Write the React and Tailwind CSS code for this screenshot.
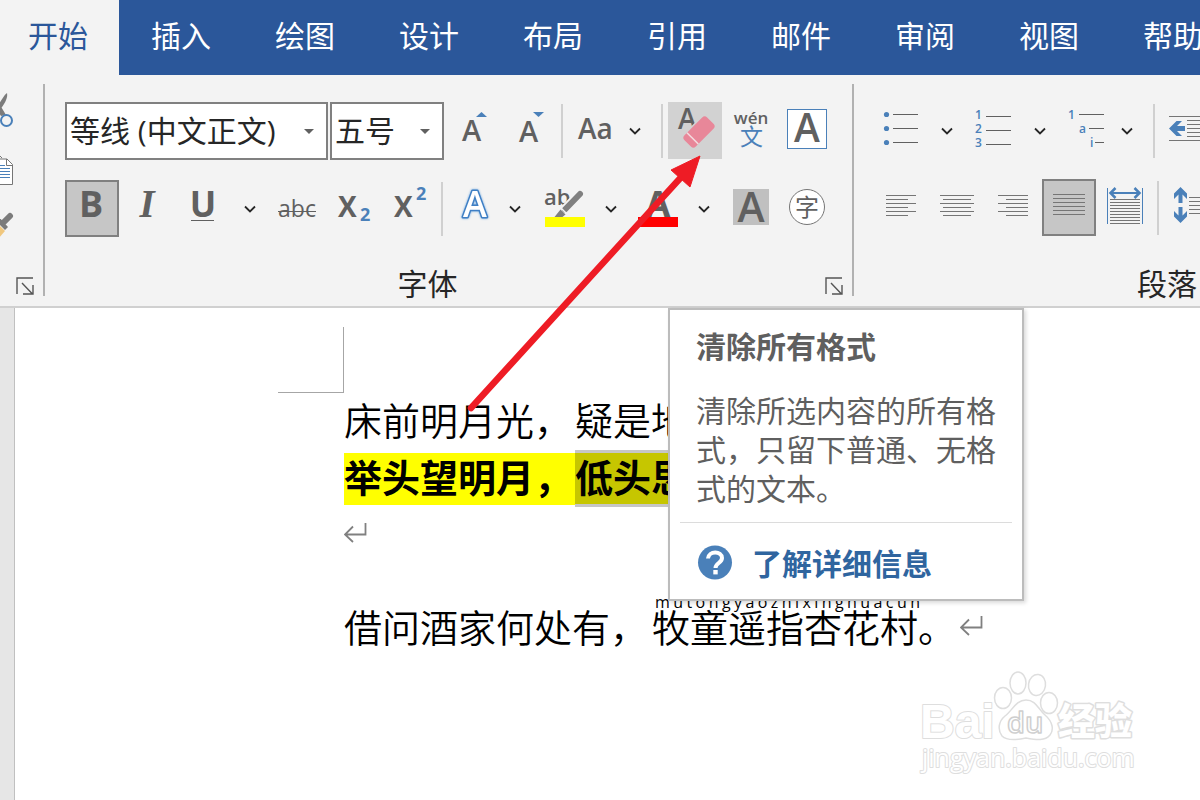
import React from 'react';

const TABS = ['插入', '绘图', '设计', '布局', '引用', '邮件', '审阅', '视图', '帮助'];
const INK = '#606060';
const BLUE = '#4a80b9';
const SANS = '"Open Sans", "Noto Sans CJK SC", sans-serif';

function Tool({ label, children, className = '' }) {
  return (
    <button type="button" aria-label={label} className={`block h-[57px] w-[54px] shrink-0 ${className}`}>
      <svg viewBox="0 0 54 57" width="54" height="57" fontFamily={SANS} fill={INK} className="block">
        {children}
      </svg>
    </button>
  );
}

function More({ label, className = 'w-[38px]' }) {
  return (
    <button type="button" aria-label={label} className={`flex h-[57px] shrink-0 items-center justify-center ${className}`}>
      <svg viewBox="0 0 12 8" width="12" height="8" fill="none" stroke="#262626" strokeWidth="1.8" className="block">
        <path d="M1 1.5 6 6.5 11 1.5" />
      </svg>
    </button>
  );
}

function Divider({ className = '' }) {
  return <div className={`mt-[2px] h-[54px] w-[2px] shrink-0 bg-[#d0d0d0] ${className}`} />;
}

function GroupDivider() {
  return <div className="mt-[9px] mb-[10px] w-[2px] shrink-0 bg-[#b1b1b1]" />;
}

function Launcher({ label, className }) {
  return (
    <button type="button" aria-label={label} className={`flex h-10 items-center justify-end ${className}`}>
      <svg viewBox="0 0 18 18" width="18" height="18" fill="none" stroke="#555" strokeWidth="1.4" className="block">
        <path d="M1 17V1H17M6 6 16 16.5M17 8V17H7" />
      </svg>
    </button>
  );
}

function Combo({ id, label, value, className }) {
  return (
    <div className={`relative h-[58px] shrink-0 ${className}`}>
      <select
        id={id}
        aria-label={label}
        className="h-full w-full appearance-none border-2 border-[#808080] bg-white pb-[2px] pl-[3px] text-[30px] text-[#262626] outline-none"
      >
        <option>{value}</option>
      </select>
      <svg viewBox="0 0 10 5" width="10" height="5" className="pointer-events-none absolute top-[27px] right-[14px]">
        <path d="M0 0H10L5 5Z" fill={INK} />
      </svg>
    </div>
  );
}

function Lines({ rows, step = 4, y, long, short }) {
  return Array.from({ length: rows }, (_, i) => {
    const [a, b] = short && i % 2 ? short : long;
    return <path key={i} d={`M${a} ${y + i * step}H${b}`} stroke="#757575" strokeWidth="1" />;
  });
}

function Clipboard() {
  return (
    <div className="flex w-[43px] shrink-0 flex-col overflow-hidden pt-[15px]">
      <button type="button" aria-label="剪切" className="h-[42px]">
        <svg viewBox="0 0 43 42" width="43" height="42" className="block">
          <path d="M7 3C8 8 5 13 0 20L-3 16C1 12 3 6 7 3ZM0 15 6 25 1 26-4 18Z" fill="#7b7b7b" />
          <circle cx="6.500" cy="30.500" r="5.500" fill="#f3f3f3" stroke={BLUE} strokeWidth="2" />
        </svg>
      </button>
      <button type="button" aria-label="复制" className="mt-5 h-[34px]">
        <svg viewBox="0 0 43 34" width="43" height="34" className="block" fill="none">
          <path d="M-2 7H7L12.500 12.500V32.500H-2Z" fill="#fff" stroke="#757575" />
          <path d="M6.500 7V13.500H12.500M-1 3 2 6" stroke="#757575" />
          <path d="M-2 13.500H5M-2 16.500H10M-2 19.500H10M-2 22.500H10M-2 25.500H10" stroke={BLUE} />
        </svg>
      </button>
      <button type="button" aria-label="格式刷" className="mt-[26px] h-[32px]">
        <svg viewBox="0 0 43 32" width="43" height="32" className="block">
          <path d="M-2 12 5 19-2 27Z" fill="#f0c77e" />
          <path d="M-2 4 8 15 5 18-2 11Z" fill="#7b7b7b" />
          <path d="M4 10 10 4" stroke="#7b7b7b" strokeWidth="6" strokeLinecap="round" />
        </svg>
      </button>
      <Launcher label="剪贴板设置" className="mt-[22px] w-[43px] pr-[9px]" />
    </div>
  );
}

function FontGroup() {
  return (
    <div className="w-[807px] shrink-0 pt-[27px]">
      <div className="flex h-[58px] pl-5">
        <Combo id="font-name" label="字体" value="等线 (中文正文)" className="w-[263px]" />
        <Combo id="font-size" label="字号" value="五号" className="ml-[2px] w-[114px]" />
        <Tool label="增大字号" className="ml-1">
          <text x="14" y="39" fontSize="29" fontWeight="600">A</text>
          <path d="M28 15H39L33.500 10Z" fill={BLUE} />
        </Tool>
        <Tool label="减小字号" className="ml-[2px]">
          <text x="15" y="40" fontSize="29" fontWeight="600">A</text>
          <path d="M29 10H40L34.500 15Z" fill={BLUE} />
        </Tool>
        <Divider className="ml-[3px]" />
        <Tool label="更改大小写" className="ml-[5px]">
          <text x="10" y="37" fontSize="28" fontWeight="600">Aa</text>
        </Tool>
        <More label="更改大小写选项" className="w-[26px]" />
        <Divider className="ml-[13px]" />
        <Tool label="清除所有格式" className="ml-[5px] bg-[#d2d2d2]">
          <text x="10" y="27" fontSize="28" fontWeight="600">A</text>
          <g transform="translate(31 30) rotate(-45)">
            <rect x="-17.500" y="-9.500" width="35" height="19" rx="4" fill="#d2d2d2" />
            <rect x="-16" y="-8" width="32" height="16" rx="3.500" fill="#e88799" />
            <path d="M-9-8V8" stroke="#f3dde0" strokeWidth="1.500" />
          </g>
        </Tool>
        <Tool label="拼音指南" className="ml-[2px]">
          <text x="27" y="22" fontSize="17" fontWeight="600" textAnchor="middle">wén</text>
          <text x="16" y="43" fontSize="23" fill={BLUE}>文</text>
        </Tool>
        <Tool label="字符边框" className="ml-[2px]">
          <rect x="7.500" y="7.500" width="39" height="39" fill="#fff" stroke={BLUE} />
          <text x="27" y="40" fontSize="39" fontWeight="600" textAnchor="middle">A</text>
        </Tool>
      </div>

      <div className="mt-5 flex h-[57px] pl-5">
        <Tool label="加粗" className="bg-[#c6c6c6] ring-2 ring-[#808080] ring-inset">
          <text x="26" y="37" fontSize="36" fontWeight="700" textAnchor="middle">B</text>
        </Tool>
        <Tool label="倾斜" className="ml-px">
          <text x="27" y="37" fontSize="39" fontWeight="700" fontStyle="italic" fontFamily='"Liberation Serif", serif' textAnchor="middle">I</text>
        </Tool>
        <Tool label="下划线" className="ml-[2px]">
          <text x="27" y="37" fontSize="35" fontWeight="700" textAnchor="middle">U</text>
          <path d="M15 40.500H38" stroke={INK} />
        </Tool>
        <More label="下划线选项" className="w-10" />
        <Tool label="删除线">
          <text x="27" y="37" fontSize="23" textAnchor="middle">abc</text>
          <path d="M8 31.500H46" stroke={INK} />
        </Tool>
        <Tool label="下标" className="ml-[3px]">
          <text x="11" y="37" fontSize="28" fontWeight="700">X</text>
          <text x="33" y="41" fontSize="18" fontWeight="700" fill={BLUE}>2</text>
        </Tool>
        <Tool label="上标" className="ml-[2px]">
          <text x="11" y="37" fontSize="28" fontWeight="700">X</text>
          <text x="33" y="20" fontSize="18" fontWeight="700" fill={BLUE}>2</text>
        </Tool>
        <Divider className="ml-1" />
        <Tool label="文本效果" className="ml-[5px]">
          <text x="27" y="37" fontSize="36" fontWeight="600" textAnchor="middle" fill="#fff" stroke="#3f7fc4" strokeWidth="3" strokeLinejoin="round" paintOrder="stroke" className="drop-shadow-[0_0_1px_#6fa8e0]">A</text>
        </Tool>
        <More label="文本效果选项" className="w-[26px]" />
        <Tool label="文本突出显示颜色" className="ml-[10px]">
          <text x="6" y="25" fontSize="22" fontWeight="600">ab</text>
          <path d="M42 14 26 30" stroke="#f3f3f3" strokeWidth="9" />
          <path d="M42 14 27 29.500" stroke="#808080" strokeWidth="6" strokeLinecap="round" />
          <path d="M22.500 29.500 27.500 34.500 24.500 37H16.500Z" fill="#808080" />
          <path d="M21 26 31 36" stroke="#f3f3f3" strokeWidth="1.500" />
          <rect x="7" y="37" width="40" height="10" fill="#ff0" />
        </Tool>
        <More label="突出显示选项" />
        <Tool label="字体颜色" className="ml-px">
          <text x="27" y="37" fontSize="36" fontWeight="700" textAnchor="middle">A</text>
          <rect x="7" y="37" width="40" height="10" fill="#f00" />
        </Tool>
        <More label="字体颜色选项" />
        <Tool label="字符底纹" className="ml-px">
          <rect x="9" y="9" width="36" height="36" fill="#c0c0c0" />
          <text x="27" y="42" fontSize="41" fontWeight="600" textAnchor="middle">A</text>
        </Tool>
        <Tool label="带圈字符" className="ml-[2px]">
          <circle cx="27" cy="27" r="17.500" fill="#fff" stroke="#757575" />
          <text x="27" y="36" fontSize="24" textAnchor="middle">字</text>
        </Tool>
      </div>

      <div className="mt-[29px] flex h-10">
        <div className="flex-1 text-center text-[30px] leading-9 text-[#262626]">字体</div>
        <Launcher label="字体设置" className="w-[42px] pr-[9px]" />
      </div>
    </div>
  );
}

function ParagraphGroup() {
  return (
    <div className="w-[626px] shrink-0 pt-[27px]">
      <div className="flex h-[57px] pl-5">
        <Tool label="项目符号">
          {[12.5, 26.5, 40.5].map((y) => (
            <g key={y}>
              <circle cx="12.500" cy={y} r="2.600" fill={BLUE} />
              <path d={`M19 ${y}H44`} stroke={INK} />
            </g>
          ))}
        </Tool>
        <More label="项目符号选项" />
        <Tool label="编号" className="ml-px">
          {[1, 2, 3].map((n) => (
            <g key={n}>
              <text x="8" y={3 + n * 14} fontSize="12" fontWeight="600" fill={BLUE}>{n}</text>
              <path d={`M19 ${n * 14 + 0.5}H44`} stroke={INK} />
            </g>
          ))}
        </Tool>
        <More label="编号选项" />
        <Tool label="多级列表" className="ml-px">
          <g fontSize="12" fontWeight="600" fill={BLUE}>
            <text x="8" y="17">1</text>
            <text x="19" y="31">a</text>
            <text x="30" y="45">i</text>
          </g>
          <path d="M19 12.500H44M29 26.500H44M35 40.500H44" stroke={INK} />
        </Tool>
        <More label="多级列表选项" className="w-[26px]" />
        <Divider className="ml-[13px]" />
        <Tool label="减少缩进量" className="ml-[5px]">
          <path d="M9 14.500H54M9 38.500H54M27 18.500H54M27 22.500H54M27 26.500H54M27 30.500H54M27 34.500H54" stroke="#757575" />
          <path d="M9 26.500 16.500 19H22L17 24H25V29H17L22 34H16.500Z" fill={BLUE} />
        </Tool>
      </div>

      <div className="mt-5 flex h-[57px] pl-5">
        <Tool label="左对齐">
          <Lines rows={6} y={16.5} long={[12, 42]} short={[12, 34]} />
        </Tool>
        <Tool label="居中" className="ml-[2px]">
          <Lines rows={6} y={16.5} long={[10, 44]} short={[13, 41]} />
        </Tool>
        <Tool label="右对齐" className="ml-[2px]">
          <Lines rows={6} y={16.5} long={[12, 42]} short={[20, 42]} />
        </Tool>
        <Tool label="两端对齐" className="ml-[2px] bg-[#c6c6c6] ring-2 ring-[#808080] ring-inset">
          <Lines rows={6} y={15.5} long={[11, 43]} />
        </Tool>
        <Tool label="分散对齐" className="ml-[2px]">
          <path d="M9.500 9V45M44.500 9V45" stroke={BLUE} />
          <path d="M13 14H41" stroke={BLUE} strokeWidth="2" />
          <path d="M17.500 9 12.500 14 17.500 19M36.500 9 41.500 14 36.500 19" fill="none" stroke={BLUE} strokeWidth="2.500" />
          <Lines rows={9} step={3} y={20.5} long={[12, 42]} />
        </Tool>
        <Divider className="ml-[5px]" />
        <Tool label="行距" className="ml-[5px]">
          <path d="M16.500 8 23 14.500V20L18.500 15.500V24H14.500V15.500L10 20V14.500Z" fill={BLUE} />
          <path d="M16.500 44 23 37.500V32L18.500 36.500V28H14.500V36.500L10 32V37.500Z" fill={BLUE} />
          <Lines rows={5} y={18.5} long={[25, 54]} />
        </Tool>
      </div>

      <div className="mt-[30px] h-10 text-center text-[30px] leading-9 text-[#262626]">段落</div>
    </div>
  );
}

function ReturnMark() {
  return (
    <svg viewBox="0 0 24 20" width="24" height="20" fill="none" stroke="#808080" strokeWidth="1.800" className="block shrink-0">
      <path d="M21.500 0V11.500H1.500M9 3.500 1 11.500 9 19" />
    </svg>
  );
}

function Page() {
  return (
    <main className="flex flex-1 bg-[#e6e6e6] pl-[14px]">
      <div className="flex-1 border-l border-[#c0c0c0] bg-white pt-[19px] pl-[263px] text-[38px] text-black">
        <div className="h-[66px] w-[66px] border-r border-b border-[#a6a6a6]" />
        <div className="pl-[66px]">
          <p className="flex h-[57px] leading-[54px] font-[350] whitespace-nowrap">
            <span className="w-[231px] shrink-0">床前明月光，</span>
            <span>疑是地上霜。</span>
          </p>
          <p className="flex h-[57px] items-center leading-[48px] font-bold whitespace-nowrap">
            <mark className="h-[52px] w-[231px] shrink-0 bg-[#ff0] text-black">举头望明月，</mark>
            <mark className="h-[57px] border-y-[3px] border-[#c6c6c6] bg-[#c6c600] text-black">低头思故乡。</mark>
          </p>
          <div className="pt-4">
            <ReturnMark />
          </div>
          <div className="flex pt-[52px] whitespace-nowrap">
            <p className="w-[308px] shrink-0 pt-[14px] leading-9 font-[350]">借问酒家何处有，</p>
            <div>
              <div className="ml-[3px] flex h-[14px] w-[265px] items-center justify-between text-[16px] leading-[14px]">
                {[...'mutongyaozhixinghuacun'].map((c, i) => (
                  <span key={i}>{c}</span>
                ))}
              </div>
              <p className="leading-9 font-[350]">牧童遥指杏花村。</p>
            </div>
            <div className="pt-[21px] pl-1">
              <ReturnMark />
            </div>
          </div>
        </div>
      </div>
    </main>
  );
}

function Tooltip() {
  return (
    <div
      role="tooltip"
      className="absolute top-[308px] left-[668px] z-10 w-[356px] border-2 border-[#bcbcbc] bg-white px-[10px] pt-4 pb-[14px] text-[30px] text-[#5f5f5f] shadow-[2px_2px_4px_rgba(0,0,0,0.15)]"
    >
      <div className="px-4">
        <h2 className="leading-[42px] font-bold">清除所有格式</h2>
        <p className="mt-[23px] leading-[39px]">清除所选内容的所有格式，只留下普通、无格式的文本。</p>
      </div>
      <div className="mt-[14px] border-t border-[#dcdcdc] px-4 pt-5">
        <a href="#help" className="flex items-center leading-[42px] font-bold text-[#2f659f]">
          <svg viewBox="0 0 36 36" width="36" height="36" className="mr-5 block overflow-visible">
            <circle cx="19" cy="16.500" r="17" fill={BLUE} />
            <path d="M12 12.500C12.500 4.500 26 4.500 26 12C26 17 19.500 17 19.500 22" fill="none" stroke="#fff" strokeWidth="4" />
            <rect x="17.300" y="24" width="4.400" height="4.400" fill="#fff" />
          </svg>
          了解详细信息
        </a>
      </div>
    </div>
  );
}

function Pointer() {
  return (
    <svg viewBox="0 0 244 268" width="244" height="268" className="pointer-events-none absolute top-[150px] left-[464px] z-20">
      <path d="M7 258 220 24" stroke="#ee1c25" strokeWidth="6.500" strokeLinecap="round" />
      <path d="M236 6 207 20 226 37Z" fill="#ee1c25" stroke="#ee1c25" />
    </svg>
  );
}

function Watermark() {
  return (
    <svg
      viewBox="0 0 240 110"
      width="240"
      height="110"
      role="img"
      aria-label="Baidu 经验"
      fill="#fff"
      stroke="#dedede"
      strokeWidth="2"
      strokeLinejoin="round"
      className="pointer-events-none absolute top-[668px] left-[916px]"
    >
      <g paintOrder="stroke">
        <text x="4" y="70" fontSize="48" fontWeight="700" fontFamily='"Liberation Sans", sans-serif'>Bai</text>
        <text x="142" y="67" fontSize="37" fontWeight="900" strokeWidth="3" fontFamily='"Noto Sans CJK SC", sans-serif'>经验</text>
        <text x="6" y="99" fontSize="25" fontWeight="500" fontFamily={SANS}>jingyan.baidu.com</text>
      </g>
      <g strokeWidth="1.500">
        <ellipse cx="87" cy="30" rx="8.500" ry="10.500" />
        <ellipse cx="102" cy="15" rx="8" ry="11" />
        <ellipse cx="121" cy="17" rx="8.500" ry="10.500" transform="rotate(8 121 17)" />
        <ellipse cx="133" cy="35" rx="8.500" ry="10.500" />
        <path d="M110 32C120 32 122 41 129 47C137 54 138 62 134 67C129 73 121 72 110 70C101 72 91 73 86 68C81 61 83 53 89 48C96 43 100 32 110 32Z" />
        <text x="91" y="65" fontSize="29" fontWeight="600" fontFamily={SANS} stroke="#cfcfcf">du</text>
      </g>
    </svg>
  );
}

export default function App() {
  return (
    <div className="relative flex min-h-screen flex-col overflow-hidden bg-white font-['Open_Sans','Noto_Sans_CJK_SC',sans-serif]">
      <nav className="flex h-[75px] overflow-hidden bg-[#2b579a] text-[30px] leading-[72px] whitespace-nowrap text-white">
        <a href="#home" aria-current="page" className="shrink-0 bg-[#f3f3f3] pr-[31px] pl-7 text-[#2b579a]">开始</a>
        {TABS.map((t) => (
          <a key={t} href={`#${t}`} className="shrink-0 px-8">{t}</a>
        ))}
      </nav>
      <div className="flex h-[233px] overflow-hidden border-b-2 border-[#d0d0d0] bg-[#f3f3f3]">
        <Clipboard />
        <GroupDivider />
        <FontGroup />
        <GroupDivider />
        <ParagraphGroup />
      </div>
      <Page />
      <Tooltip />
      <Pointer />
      <Watermark />
    </div>
  );
}
